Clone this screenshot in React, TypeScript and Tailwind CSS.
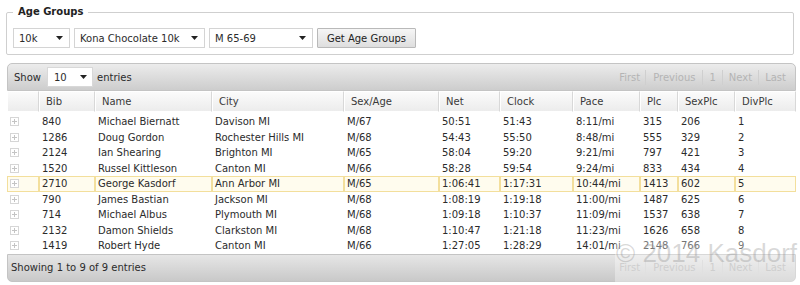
import React from 'react';

type Row = {
  bib: string;
  name: string;
  city: string;
  sexAge: string;
  net: string;
  clock: string;
  pace: string;
  plc: string;
  sexPlc: string;
  divPlc: string;
  selected?: boolean;
};

const rows: Row[] = [
  { bib: '840', name: 'Michael Biernatt', city: 'Davison MI', sexAge: 'M/67', net: '50:51', clock: '51:43', pace: '8:11/mi', plc: '315', sexPlc: '206', divPlc: '1' },
  { bib: '1286', name: 'Doug Gordon', city: 'Rochester Hills MI', sexAge: 'M/68', net: '54:43', clock: '55:50', pace: '8:48/mi', plc: '555', sexPlc: '329', divPlc: '2' },
  { bib: '2124', name: 'Ian Shearing', city: 'Brighton MI', sexAge: 'M/65', net: '58:04', clock: '59:20', pace: '9:21/mi', plc: '797', sexPlc: '421', divPlc: '3' },
  { bib: '1520', name: 'Russel Kittleson', city: 'Canton MI', sexAge: 'M/66', net: '58:28', clock: '59:54', pace: '9:24/mi', plc: '833', sexPlc: '434', divPlc: '4' },
  { bib: '2710', name: 'George Kasdorf', city: 'Ann Arbor MI', sexAge: 'M/65', net: '1:06:41', clock: '1:17:31', pace: '10:44/mi', plc: '1413', sexPlc: '602', divPlc: '5', selected: true },
  { bib: '790', name: 'James Bastian', city: 'Jackson MI', sexAge: 'M/68', net: '1:08:19', clock: '1:19:18', pace: '11:00/mi', plc: '1487', sexPlc: '625', divPlc: '6' },
  { bib: '714', name: 'Michael Albus', city: 'Plymouth MI', sexAge: 'M/68', net: '1:09:18', clock: '1:10:37', pace: '11:09/mi', plc: '1537', sexPlc: '638', divPlc: '7' },
  { bib: '2132', name: 'Damon Shields', city: 'Clarkston MI', sexAge: 'M/68', net: '1:10:47', clock: '1:21:18', pace: '11:23/mi', plc: '1626', sexPlc: '658', divPlc: '8' },
  { bib: '1419', name: 'Robert Hyde', city: 'Canton MI', sexAge: 'M/66', net: '1:27:05', clock: '1:28:29', pace: '14:01/mi', plc: '2148', sexPlc: '766', divPlc: '9' },
];

const headers = ['Bib', 'Name', 'City', 'Sex/Age', 'Net', 'Clock', 'Pace', 'Plc', 'SexPlc', 'DivPlc'];
const cols = 'grid grid-cols-[32px_56px_117px_132px_95px_61px_73px_67px_38px_57px_1fr]';

const Arrow = () => (
  <svg width="7" height="4" viewBox="0 0 7 4" className="shrink-0">
    <path d="M0 0h7L3.5 4z" fill="#222" />
  </svg>
);

const FakeSelect: React.FC<{ label: string; w: string }> = ({ label, w }) => (
  <div className={`${w} h-[20px] flex items-center justify-between border border-[#d4d4d4] bg-white pl-[5px] pr-[6px]`}>
    <span>{label}</span>
    <Arrow />
  </div>
);

const Pager = () => (
  <div className="flex items-center text-[#b4b4b4] h-[19px]">
    <span className="px-[5px] border-r border-[#cfcfcf]">First</span>
    <span className="px-[7px] border-r border-[#cfcfcf]">Previous</span>
    <span className="px-[6px] border-r border-[#cfcfcf]">1</span>
    <span className="px-[6px] border-r border-[#cfcfcf]">Next</span>
    <span className="pl-[6px] pr-[9px]">Last</span>
  </div>
);

const PlusBox = () => (
  <div className="w-[9px] h-[9px] border border-[#d6d6d6] bg-white flex items-center justify-center ml-[2px]">
    <svg width="5" height="5" viewBox="0 0 5 5">
      <path d="M2.5 0v5M0 2.5h5" stroke="#c4c4c4" strokeWidth="1" />
    </svg>
  </div>
);

export default function App() {
  return (
    <div className="w-[800px] h-[285px] bg-white text-[10px] text-[#2b2b2b] font-['DejaVu_Sans',sans-serif] relative overflow-hidden">
      <fieldset className="mx-[6px] mt-[4px] border border-[#cfcfcf] rounded-[2px] px-[6px] pb-[6px]">
        <legend className="px-[5px] font-bold text-[#222] leading-[16px]">Age Groups</legend>
        <div className="flex items-center gap-[4px] mt-[8px]">
          <FakeSelect label="10k" w="w-[57px]" />
          <FakeSelect label="Kona Chocolate 10k" w="w-[131px]" />
          <FakeSelect label="M 65-69" w="w-[104px]" />
          <button className="w-[99px] h-[20px] border border-[#b9b9b9] bg-gradient-to-b from-[#f6f6f6] to-[#dedede] text-[#222] rounded-[1px]">
            Get Age Groups
          </button>
        </div>
      </fieldset>

      <div className="mx-[7px] mt-[8px] w-[789px]">
        <div className="h-[28px] rounded-t-[5px] border border-[#c4c4c4] bg-gradient-to-b from-[#ececec] to-[#cdcdcd] flex items-center justify-between pl-[6px]">
          <div className="flex items-center">
            <span>Show</span>
            <div className="ml-[6px] w-[46px] h-[20px] bg-white flex items-center justify-between pl-[6px] pr-[5px] border border-[#d8d8d8]">
              <span>10</span>
              <Arrow />
            </div>
            <span className="ml-[4px]">entries</span>
          </div>
          <Pager />
        </div>

        <div className={`${cols} h-[21px] bg-[#f6f6f6]`}>
          <div className="border border-white border-r-[#d8d8d8] bg-gradient-to-b from-[#fbfbfb] to-[#ececec]" />
          {headers.map((h) => (
            <div
              key={h}
              className="border border-white border-r-[#d8d8d8] bg-gradient-to-b from-[#fbfbfb] to-[#ececec] pl-[6px] flex items-center text-[#3a3a3a]"
            >
              {h}
            </div>
          ))}
        </div>

        <div className="pt-[2px]">
          {rows.map((r) => {
            const cells = [r.bib, r.name, r.city, r.sexAge, r.net, r.clock, r.pace, r.plc, r.sexPlc, r.divPlc];
            const cellCls = r.selected ? 'border border-[#f3df9c] bg-[#fffcee]' : 'border border-transparent';
            return (
              <div key={r.bib} className={`${cols} h-[15.5px] leading-[13px]`}>
                <div className={`${cellCls} flex items-center`}>
                  <PlusBox />
                </div>
                {cells.map((c, i) => (
                  <div key={i} className={`${cellCls} pl-[2px] flex items-center whitespace-nowrap`}>
                    {c}
                  </div>
                ))}
              </div>
            );
          })}
        </div>

        <div className="h-[28px] rounded-b-[5px] border border-[#c4c4c4] bg-gradient-to-b from-[#e6e6e6] to-[#c9c9c9] flex items-center justify-between pl-[3px]">
          <span className="text-[#2b2b2b]">Showing 1 to 9 of 9 entries</span>
          <Pager />
        </div>
      </div>

      <div className="absolute left-[615px] top-[237px] w-[185px] h-[45px] bg-white/35 pl-[1px]">
        <span className="block whitespace-nowrap font-['Liberation_Sans',sans-serif] text-[26px] leading-[32px] text-[#8f8f8f]/35">
          © 2014 Kasdorf
        </span>
      </div>
    </div>
  );
}
